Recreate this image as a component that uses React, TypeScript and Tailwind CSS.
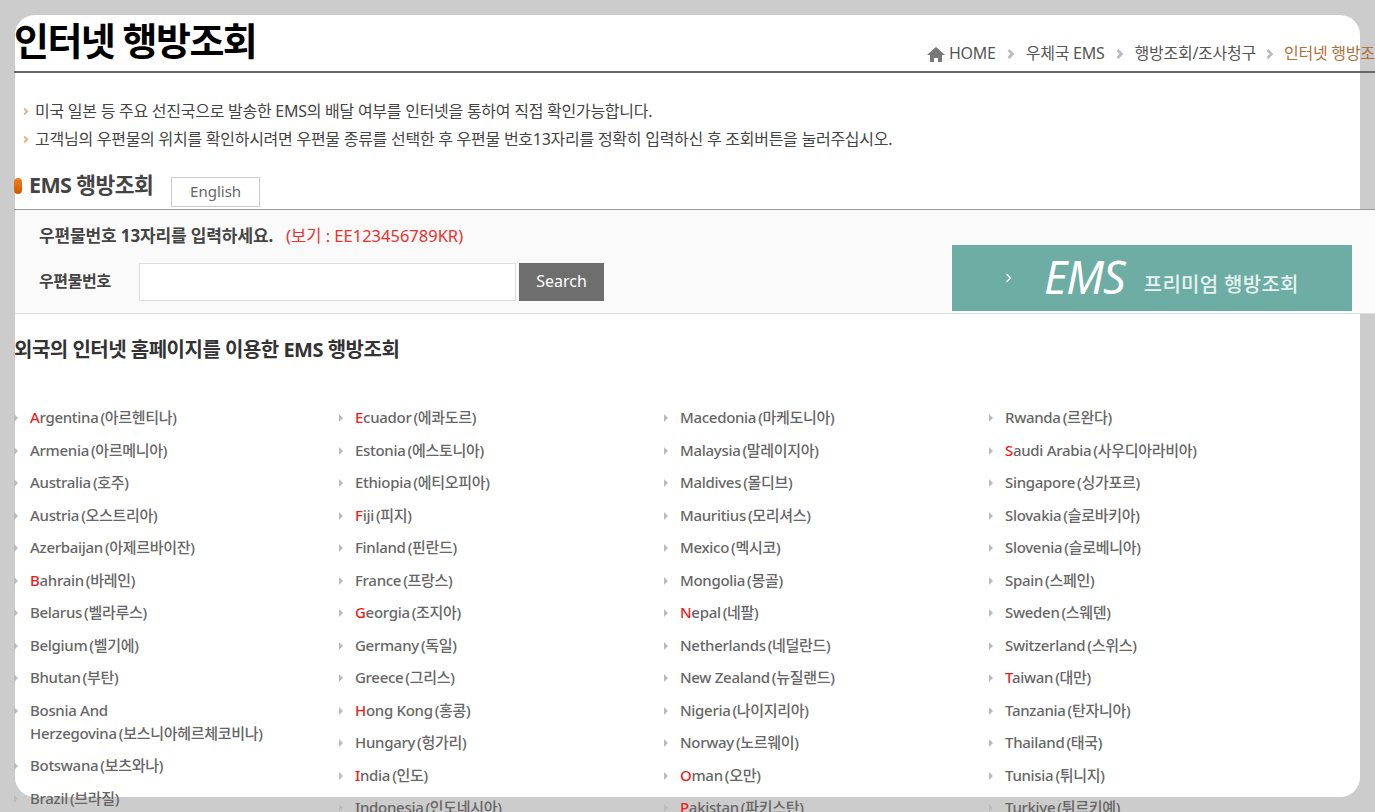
const col1 = [
  ['A', 'rgentina', '(아르헨티나)'],
  ['', 'Armenia', '(아르메니아)'],
  ['', 'Australia', '(호주)'],
  ['', 'Austria', '(오스트리아)'],
  ['', 'Azerbaijan', '(아제르바이잔)'],
  ['B', 'ahrain', '(바레인)'],
  ['', 'Belarus', '(벨라루스)'],
  ['', 'Belgium', '(벨기에)'],
  ['', 'Bhutan', '(부탄)'],
  ['', 'Bosnia And Herzegovina', '(보스니아헤르체코비나)'],
  ['', 'Botswana', '(보츠와나)'],
  ['', 'Brazil', '(브라질)'],
];
const col2 = [
  ['E', 'cuador', '(에콰도르)'],
  ['', 'Estonia', '(에스토니아)'],
  ['', 'Ethiopia', '(에티오피아)'],
  ['F', 'iji', '(피지)'],
  ['', 'Finland', '(핀란드)'],
  ['', 'France', '(프랑스)'],
  ['G', 'eorgia', '(조지아)'],
  ['', 'Germany', '(독일)'],
  ['', 'Greece', '(그리스)'],
  ['H', 'ong Kong', '(홍콩)'],
  ['', 'Hungary', '(헝가리)'],
  ['I', 'ndia', '(인도)'],
  ['', 'Indonesia', '(인도네시아)'],
];
const col3 = [
  ['', 'Macedonia', '(마케도니아)'],
  ['', 'Malaysia', '(말레이지아)'],
  ['', 'Maldives', '(몰디브)'],
  ['', 'Mauritius', '(모리셔스)'],
  ['', 'Mexico', '(멕시코)'],
  ['', 'Mongolia', '(몽골)'],
  ['N', 'epal', '(네팔)'],
  ['', 'Netherlands', '(네덜란드)'],
  ['', 'New Zealand', '(뉴질랜드)'],
  ['', 'Nigeria', '(나이지리아)'],
  ['', 'Norway', '(노르웨이)'],
  ['O', 'man', '(오만)'],
  ['P', 'akistan', '(파키스탄)'],
];
const col4 = [
  ['', 'Rwanda', '(르완다)'],
  ['S', 'audi Arabia', '(사우디아라비아)'],
  ['', 'Singapore', '(싱가포르)'],
  ['', 'Slovakia', '(슬로바키아)'],
  ['', 'Slovenia', '(슬로베니아)'],
  ['', 'Spain', '(스페인)'],
  ['', 'Sweden', '(스웨덴)'],
  ['', 'Switzerland', '(스위스)'],
  ['T', 'aiwan', '(대만)'],
  ['', 'Tanzania', '(탄자니아)'],
  ['', 'Thailand', '(태국)'],
  ['', 'Tunisia', '(튀니지)'],
  ['', 'Turkiye', '(튀르키예)'],
];

function Chevron({ className }: { className: string }) {
  return (
    <svg viewBox="0 0 8 10" className={className} fill="none" stroke="currentColor" strokeWidth="2.6">
      <path d="M1.5 1l4 4-4 4" />
    </svg>
  );
}

function Country({ item }: { item: string[] }) {
  return (
    <li className="relative pl-4 pb-[9.5px] leading-[23px] break-keep">
      <svg viewBox="0 0 4 8" className="absolute left-0 top-[8px] h-2 w-1 text-[#bbb]" fill="currentColor">
        <path d="M0 0l4 4-4 4z" />
      </svg>
      <span className="text-[#f01c1c]">{item[0]}</span>
      {item[1]}
      <span className="ml-[2px]">{item[2]}</span>
    </li>
  );
}

export default function App() {
  return (
    <div className="h-[812px] overflow-hidden bg-[#cccccc] px-[15px] pt-[15px] font-['Noto_Sans','Noto_Sans_CJK_KR',sans-serif] text-[#444]">
      <div className="h-[782px] w-[1345px] rounded-[20px] bg-white">
        <div className="-ml-px w-[1361px]">
          {/* 제목 + 경로 */}
          <div className="flex h-[58px] items-end whitespace-nowrap border-b-2 border-[#666]">
            <h1 className="w-[913px] shrink-0 pb-[6px] text-[38px] font-bold leading-[50px] tracking-[-1.55px] text-black">
              인터넷 행방조회
            </h1>
            <div className="flex items-center pb-[6px] text-[16px] leading-6 tracking-[-0.25px] text-[#555]">
              <svg viewBox="0 0 18 15" className="mr-[4px] mt-[3px] h-[15px] w-[18px] text-[#777]" fill="currentColor">
                <path d="M9 0L0 8h3v7h4v-4h4v4h4V8h3z" />
              </svg>
              <span>HOME</span>
              <Chevron className="mx-[11px] mt-[2px] h-[10px] w-2 text-[#bbb]" />
              <span>우체국 EMS</span>
              <Chevron className="mx-[11px] mt-[2px] h-[10px] w-2 text-[#bbb]" />
              <span>행방조회/조사청구</span>
              <Chevron className="mx-[10px] mt-[2px] h-[10px] w-2 text-[#bbb]" />
              <span className="text-[#b0703a]">인터넷 행방조회</span>
            </div>
          </div>

          {/* 안내 */}
          <ul className="pl-[9px] pt-6 text-[16px] leading-[28px] tracking-[-0.26px] text-[#444]">
            <li className="flex items-center gap-[6px]">
              <Chevron className="h-[9px] w-[6px] text-[#e3b48c]" />
              미국 일본 등 주요 선진국으로 발송한 EMS의 배달 여부를 인터넷을 통하여 직접 확인가능합니다.
            </li>
            <li className="flex items-center gap-[6px]">
              <Chevron className="h-[9px] w-[6px] text-[#e3b48c]" />
              고객님의 우편물의 위치를 확인하시려면 우편물 종류를 선택한 후 우편물 번호13자리를 정확히 입력하신 후 조회버튼을 눌러주십시오.
            </li>
          </ul>

          {/* EMS 행방조회 */}
          <div className="mt-[24px] flex h-[33px] border-b border-[#999]">
            <span className="mt-[1px] h-4 w-2 rounded-[4px] bg-gradient-to-b from-[#f08020] to-[#d05800]" />
            <h2 className="ml-[7px] text-[21.5px] font-bold leading-[16px] tracking-[-0.6px] text-[#444]">EMS 행방조회</h2>
            <a className="ml-[18px] flex h-[30px] w-[89px] items-center justify-center border border-[#ccc] pb-[2px] text-[15px] text-[#666]">English</a>
          </div>

          <div className="ml-px flex h-[104px] justify-between border-b border-[#ddd] bg-[#fafafa] pl-[24px] pr-[23px]">
            <div>
              <p className="mt-[13px] flex items-center text-[17px] font-bold leading-[26px] tracking-[-0.13px] text-[#444]">
                우편물번호 13자리를 입력하세요.
                <span className="ml-[13px] text-[16.5px] font-normal tracking-normal text-[#f0302a]">(보기 : EE123456789KR)</span>
              </p>
              <div className="mt-[14px] flex items-center">
                <label className="w-[100px] pb-[2px] text-[16px] font-bold tracking-[-0.35px] text-[#444]">우편물번호</label>
                <input className="h-[38px] w-[377px] border border-[#ddd] bg-white" />
                <button className="ml-[3px] h-[38px] w-[85px] bg-[#6e6e6e] pb-[2px] text-[16px] text-white">Search</button>
              </div>
            </div>
            <a className="mt-[35px] flex h-[66px] w-[400px] items-center bg-[#6dada4] text-white">
              <Chevron className="ml-[53px] h-[12px] w-[8px] text-white [stroke-width:1.2]" />
              <span className="mb-[4px] ml-[31px] text-[45px] italic leading-none tracking-[-1px]">EMS</span>
              <span className="ml-[19px] mt-[14px] text-[20px] font-medium tracking-[0.3px] text-[#e6f2f0]">프리미엄 행방조회</span>
            </a>
          </div>

          {/* 외국 홈페이지 */}
          <h3 className="mt-[22px] text-[20px] font-bold leading-[28px] tracking-[-0.5px] text-[#333]">
            외국의 인터넷 홈페이지를 이용한 EMS 행방조회
          </h3>

          <div className="mt-[42px] grid grid-cols-[325px_325px_325px_325px] text-[15px] font-medium tracking-[-0.3px] text-[#666]">
            {[col1, col2, col3, col4].map((col, i) => (
              <ul key={i} className="pr-[60px]">
                {col.map((item) => (
                  <Country key={item[1]} item={item} />
                ))}
              </ul>
            ))}
          </div>
        </div>
      </div>
    </div>
  );
}
